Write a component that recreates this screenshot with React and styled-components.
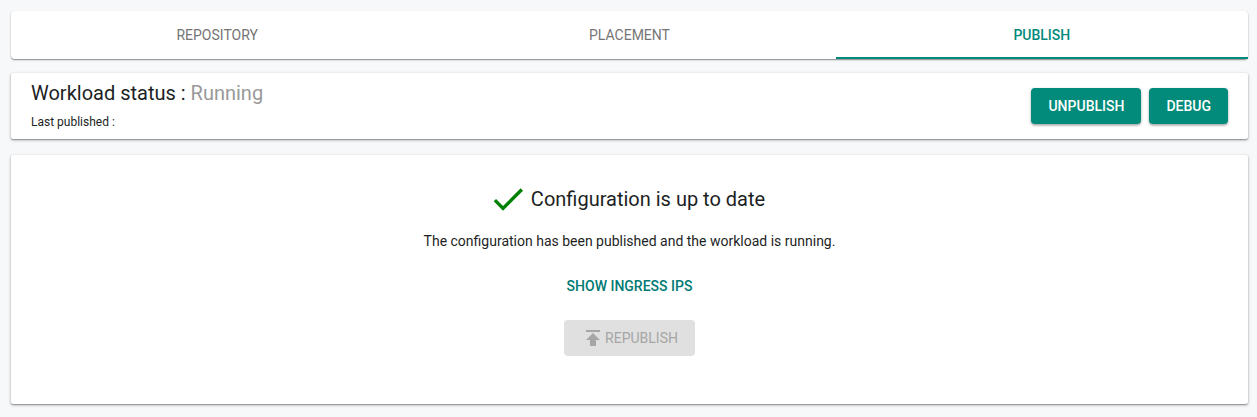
import React, { useState } from "react";
import styled, { createGlobalStyle } from "styled-components";
import { MdCheck, MdPublish } from "react-icons/md";

const GlobalStyle = createGlobalStyle`
  body {
    margin: 0;
    background-color: #f7f8fa;
    color: #1d1f24;
    font-family: Roboto, "Liberation Sans", sans-serif;
    font-size: 14px;
  }
`;

const Page = styled.main`
  padding: 11px 9px 12px 11px;
`;

const Tabs = styled.nav`
  display: flex;
  margin-bottom: 14px;
  border-radius: 4px;
  background-color: #fff;
  box-shadow: 0 1px 2px rgba(0, 0, 0, 0.3), 0 1px 1px rgba(0, 0, 0, 0.2);
`;

const Tab = styled.button`
  flex: 1;
  height: 48px;
  padding: 2px 12px 0;
  border: none;
  border-bottom: 2px solid ${(props) => (props.$active ? "#028a7a" : "transparent")};
  background: none;
  color: ${(props) => (props.$active ? "#028a7a" : "#757575")};
  font-family: inherit;
  font-size: 14px;
  font-weight: ${(props) => (props.$active ? 500 : 400)};
  text-transform: uppercase;
  cursor: pointer;
`;

const Card = styled.section`
  border-radius: 2px;
  background-color: #fff;
  box-shadow: 0 1px 3px rgba(0, 0, 0, 0.35), 0 1px 1px rgba(0, 0, 0, 0.2);
`;

const StatusCard = styled(Card)`
  display: flex;
  align-items: center;
  justify-content: space-between;
  margin-bottom: 16px;
  padding: 8px 20px;
`;

const Title = styled.h2`
  margin: 0;
  font-size: 20px;
  font-weight: 400;
  line-height: 24px;
`;

const Status = styled.span`
  color: #999;
`;

const Published = styled.p`
  margin: 8px 0 0;
  font-size: 12px;
  line-height: 18px;
`;

const Actions = styled.div`
  display: flex;
  gap: 8px;
`;

const Button = styled.button`
  display: flex;
  align-items: center;
  justify-content: center;
  height: 36px;
  padding: 0 17px;
  border: none;
  border-radius: 4px;
  background-color: #028a7a;
  box-shadow: 0 1px 3px rgba(0, 0, 0, 0.25), 0 2px 2px rgba(0, 0, 0, 0.15);
  color: #fff;
  font-family: inherit;
  font-size: 14px;
  font-weight: 500;
  text-transform: uppercase;
  cursor: pointer;

  &:disabled {
    background-color: #e0e0e0;
    box-shadow: none;
    color: #a6a6a6;
    font-weight: 400;
    cursor: default;
  }
`;

const TextButton = styled(Button)`
  margin: 17px 0 16px;
  background: none;
  box-shadow: none;
  color: #007a74;
`;

const ConfigCard = styled(Card)`
  display: flex;
  flex-direction: column;
  align-items: center;
  padding: 24px 20px 48px;
`;

const ConfigHeader = styled.div`
  display: flex;
  align-items: center;
  gap: 3px;
  padding-right: 6px;
`;

const CheckIcon = styled(MdCheck)`
  color: #008000;
  font-size: 40px;
`;

const PublishIcon = styled(MdPublish)`
  font-size: 24px;
`;

const Message = styled.p`
  margin: 12px 0 0;
  line-height: 20px;
`;

const tabs = ["Repository", "Placement", "Publish"];

const App = () => {
  const [activeTab, setActiveTab] = useState("Publish");

  return (
    <>
      <GlobalStyle />
      <Page>
        <Tabs>
          {tabs.map((tab) => (
            <Tab key={tab} $active={tab === activeTab} onClick={() => setActiveTab(tab)}>
              {tab}
            </Tab>
          ))}
        </Tabs>

        <StatusCard>
          <div>
            <Title>
              Workload status : <Status>Running</Status>
            </Title>
            <Published>Last published :</Published>
          </div>
          <Actions>
            <Button>Unpublish</Button>
            <Button>Debug</Button>
          </Actions>
        </StatusCard>

        <ConfigCard>
          <ConfigHeader>
            <CheckIcon />
            <Title>Configuration is up to date</Title>
          </ConfigHeader>
          <Message>The configuration has been published and the workload is running.</Message>
          <TextButton>Show ingress IPs</TextButton>
          <Button disabled>
            <PublishIcon />
            Republish
          </Button>
        </ConfigCard>
      </Page>
    </>
  );
};

export default App;
